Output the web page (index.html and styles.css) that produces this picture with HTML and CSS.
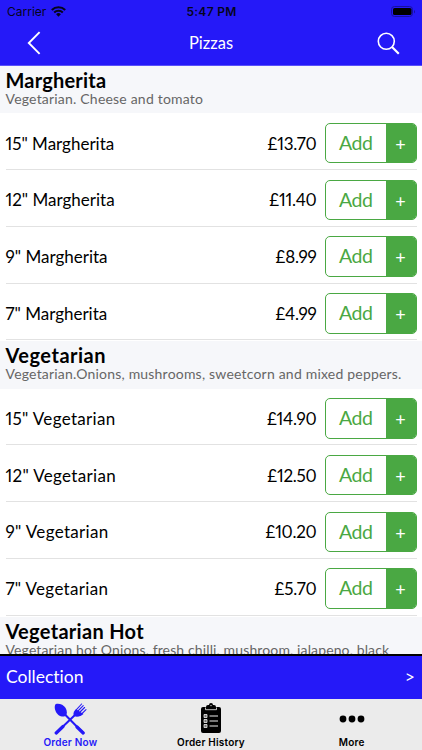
FILE: index.html
```html
<!DOCTYPE html>
<html lang="en">
<head>
    <meta charset="UTF-8">
    <meta name="viewport" content="width=device-width, initial-scale=1.0">
    <title>Pizzas</title>
    <link rel="stylesheet" href="styles.css">
</head>
<body>
    <header class="header">
        <div class="status-bar">
            <div class="carrier">
                <span>Carrier</span>
                <svg width="15" height="11" viewBox="0 0 15 11">
                    <path d="M.8 4a9.600 9.600 0 0 1 13.400 0M3.200 6.500a6.200 6.200 0 0 1 8.600 0" fill="none" stroke="#05051c" stroke-width="2.100"/>
                    <path d="M5.100 8.300a3.400 3.400 0 0 1 4.800 0L7.500 10.800z" fill="#05051c"/>
                </svg>
            </div>
            <span class="time">5:47 PM</span>
            <svg class="battery" width="25" height="11" viewBox="0 0 25 11">
                <rect x=".5" y=".5" width="21" height="10" rx="3" fill="none" stroke="#1710a0"/>
                <rect x="2" y="2" width="18.500" height="7" rx="1.6"/>
                <path d="M23 4v3.4q1-.5 1-1.7T23 4z" fill="#1710a0"/>
            </svg>
        </div>
        <div class="nav-bar">
            <svg class="back" width="14" height="24" viewBox="0 0 14 24">
                <path d="M12.600 1.200 1.800 12l10.800 10.800" fill="none" stroke="#fff" stroke-width="1.900"/>
            </svg>
            <h1>Pizzas</h1>
            <svg class="search" width="23" height="23" viewBox="0 0 23 23">
                <circle cx="9.300" cy="9.300" r="8" fill="none" stroke="#fff" stroke-width="1.600"/>
                <path d="M14.800 14.800 21.800 21.800" stroke="#fff" stroke-width="2.200"/>
            </svg>
        </div>
    </header>

    <main class="menu">
        <section>
            <div class="category">
                <h2>Margherita</h2>
                <p>Vegetarian. Cheese and tomato</p>
            </div>
            <ul>
                <li><span class="name">15" Margherita</span><span class="price">£13.70</span><button class="add"><span>Add</span><b>+</b></button></li>
                <li><span class="name">12" Margherita</span><span class="price">£11.40</span><button class="add"><span>Add</span><b>+</b></button></li>
                <li><span class="name">9" Margherita</span><span class="price">£8.99</span><button class="add"><span>Add</span><b>+</b></button></li>
                <li><span class="name">7" Margherita</span><span class="price">£4.99</span><button class="add"><span>Add</span><b>+</b></button></li>
            </ul>
        </section>
        <section class="vegetarian">
            <div class="category">
                <h2>Vegetarian</h2>
                <p>Vegetarian.Onions, mushrooms, sweetcorn and mixed peppers.</p>
            </div>
            <ul>
                <li><span class="name">15" Vegetarian</span><span class="price">£14.90</span><button class="add"><span>Add</span><b>+</b></button></li>
                <li><span class="name">12" Vegetarian</span><span class="price">£12.50</span><button class="add"><span>Add</span><b>+</b></button></li>
                <li><span class="name">9" Vegetarian</span><span class="price">£10.20</span><button class="add"><span>Add</span><b>+</b></button></li>
                <li><span class="name">7" Vegetarian</span><span class="price">£5.70</span><button class="add"><span>Add</span><b>+</b></button></li>
            </ul>
        </section>
        <section class="vegetarian hot">
            <div class="category">
                <h2>Vegetarian Hot</h2>
                <p>Vegetarian hot Onions, fresh chilli, mushroom, jalapeno, black</p>
            </div>
        </section>
    </main>

    <div class="collection">
        <span>Collection</span>
        <span class="arrow">&gt;</span>
    </div>

    <nav class="tabs">
        <a class="tab active">
            <svg width="34" height="32" viewBox="0 0 34 32">
                <g fill="none" stroke="#2519f8" stroke-linecap="round">
                    <path d="M11 10.500 30.200 30" stroke-width="2"/>
                    <path d="M24 24 30.200 30" stroke-width="3.200"/>
                    <path d="M23.500 10.500 3.200 30" stroke-width="2"/>
                    <path d="M10 23.500 3.200 30" stroke-width="3.200"/>
                </g>
                <path d="M2.500 1.200C5.500 0 10.500 1.500 12.600 5c1.700 3 1.600 6.200.3 7.500s-4.700 1.500-7.500-.6C2 9.200.8 3.500 2.500 1.200z" fill="#2519f8"/>
                <path d="M20.900 8.800 23 6.300l7.500 4.700-2.600 1.800q-3.500 1.500-6.500.5-1.800-2-.5-4.500z" fill="#2519f8"/>
                <path d="M22.300 7.800 28.600 1M24 9 30.200 2.600M25.500 10.500 31.600 4.500M27.500 12 33 6.600" stroke="#2519f8" stroke-width="1.100" stroke-linecap="round"/>
            </svg>
            <span>Order Now</span>
        </a>
        <a class="tab">
            <svg width="22" height="31" viewBox="0 0 22 31">
                <path d="M3 4h3q0-2 2-2h1q0-2 2-2t2 2h1q2 0 2 2h3q2 0 2 2v22q0 2-2 2H3q-2 0-2-2V6q0-2 2-2z"/>
                <path d="M5.500 4.500v2.200h11V4.500" fill="none" stroke="#ebebeb" stroke-width=".8"/>
                <circle cx="11" cy="2.600" r=".7" fill="#ebebeb"/>
                <path d="M9.500 13h8.500M9.500 18h8.500M9.500 23h8.500" stroke="#ebebeb" stroke-width="1.100"/>
                <path d="M4 11.500h3v3H4zM4 16.500h3v3H4zM4 21.500h3v3H4z" fill="#777" stroke="#ebebeb" stroke-width=".8"/>
            </svg>
            <span>Order History</span>
        </a>
        <a class="tab">
            <svg width="26" height="31" viewBox="0 0 26 31">
                <circle cx="4" cy="16" r="3.400"/>
                <circle cx="13" cy="16" r="3.400"/>
                <circle cx="22" cy="16" r="3.400"/>
            </svg>
            <span>More</span>
        </a>
    </nav>
</body>
</html>
```
FILE: styles.css
```css
* {
    box-sizing: border-box;
}
body {
    display: flex;
    flex-direction: column;
    height: 750px;
    margin: 0;
    overflow: hidden;
    font-family: Lato, sans-serif;
    font-variant-ligatures: none;
    font-variant-numeric: proportional-nums;
    background-color: #fff;
    color: #000;
}
h1, h2, p, ul {
    margin: 0;
    padding: 0;
}
svg {
    display: block;
    flex: none;
}
.header {
    flex: none;
    height: 66px;
    background-color: #2519f8;
    border-bottom: 1px solid #5a51f9;
}
.status-bar {
    display: grid;
    grid-template-columns: 1fr auto 1fr;
    align-items: center;
    height: 21px;
    padding: 1px 6px 0 7px;
    font-family: Inter, sans-serif;
    font-size: 12px;
    color: #05051c;
}
.carrier {
    display: flex;
    align-items: center;
    gap: 5px;
}
.time {
    font-weight: 600;
    letter-spacing: 0.3px;
}
.battery {
    justify-self: end;
}
.nav-bar {
    display: grid;
    grid-template-columns: 1fr auto 1fr;
    align-items: center;
    height: 44px;
    padding: 0 22px;
}
.nav-bar h1 {
    font-size: 16.5px;
    font-weight: 400;
    color: #fff;
}
.back {
    margin-left: 5px;
}
.search {
    justify-self: end;
}
.menu {
    flex: none;
    height: 588px;
    overflow: hidden;
}
.category {
    height: 47.3px;
    padding: 2px 5.5px 0;
    background-color: #f6f7fa;
}
.category h2 {
    font-size: 20px;
    line-height: 24px;
    font-weight: 700;
    letter-spacing: 0.2px;
}
.vegetarian h2 {
    letter-spacing: 0.5px;
}
.hot h2 {
    letter-spacing: 0.3px;
}
.category p {
    font-size: 14px;
    line-height: 13px;
    letter-spacing: 0.2px;
    white-space: nowrap;
    color: #666;
}
.hot p {
    letter-spacing: 0.13px;
}
.menu ul {
    padding: 0 5.5px 1px;
    list-style: none;
}
.menu li {
    display: flex;
    align-items: center;
    height: 56.75px;
    padding-top: 4px;
    border-bottom: 1px solid #e2e2e2;
    font-size: 17px;
}
.name {
    flex: 1;
}
.vegetarian .name {
    letter-spacing: 0.32px;
}
.price {
    margin-right: 8.5px;
    letter-spacing: -0.25px;
}
.add {
    display: flex;
    width: 91.5px;
    height: 40.5px;
    padding: 0;
    border: 1px solid #4aa843;
    border-radius: 5px;
    overflow: hidden;
    background-color: #fff;
    font-family: inherit;
    color: #4aa843;
}
.add span {
    flex: 1;
    font-size: 19.5px;
    line-height: 38px;
    letter-spacing: -0.5px;
}
.add b {
    width: 30px;
    background-color: #4aa843;
    font-size: 18px;
    line-height: 40px;
    font-weight: 400;
    color: #fff;
}
.collection {
    display: flex;
    flex: none;
    justify-content: space-between;
    align-items: center;
    height: 45px;
    padding: 0 7px 3px 6px;
    border-top: 2px solid #000;
    background-color: #2519f8;
    font-size: 17.5px;
    color: #fff;
}
.tabs {
    display: grid;
    grid-template-columns: repeat(3, 1fr);
    flex: 1;
    background-color: #ebebeb;
}
.tab {
    display: flex;
    flex-direction: column;
    align-items: center;
    padding-top: 4px;
    font-family: Inter, sans-serif;
    font-size: 10px;
    font-weight: 600;
    letter-spacing: 0.2px;
}
.tab span {
    margin-top: auto;
    height: 15px;
    line-height: 15px;
}
.active {
    color: #2519f8;
}
```
